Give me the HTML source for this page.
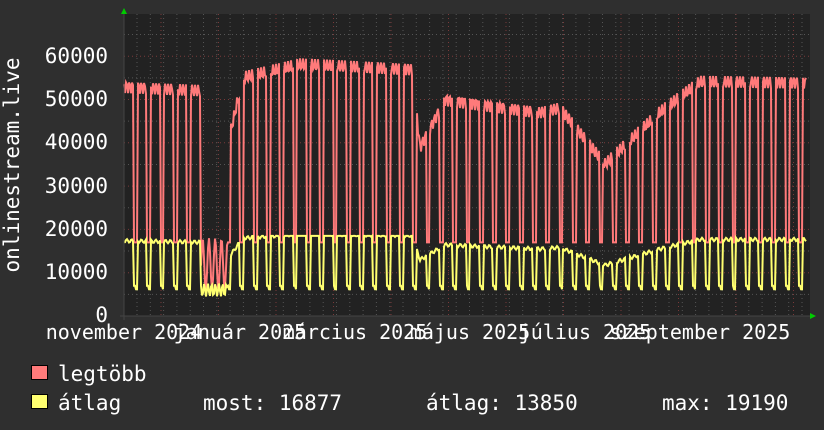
<!DOCTYPE html>
<html><head><meta charset="utf-8"><style>
html,body{margin:0;padding:0;background:#2f2f2f;width:824px;height:430px;overflow:hidden}
svg text{font-family:"DejaVu Sans Mono","Liberation Mono",monospace;fill:#fff}
</style></head><body>
<svg id="s" width="824" height="430" xmlns="http://www.w3.org/2000/svg">
<rect x="0" y="0" width="824" height="430" fill="#2f2f2f"/>
<rect x="124" y="14" width="686" height="302" fill="#222"/>
<g id="grid"></g>
<polyline id="mx" fill="none" stroke="#ff7a7a" stroke-width="2" points=""/>
<polyline id="av" fill="none" stroke="#ffff70" stroke-width="2" points=""/>
<line x1="124" y1="14" x2="124" y2="320" stroke="#444"/>
<line x1="120" y1="316" x2="812" y2="316" stroke="#444"/>
<polygon points="121,14 127,14 124,8" fill="#0c0"/>
<polygon points="810,313 810,319 816,316" fill="#0c0"/>
<g font-size="21" text-anchor="end">
<text x="108" y="63">60000</text><text x="108" y="106">50000</text>
<text x="108" y="149">40000</text><text x="108" y="193">30000</text>
<text x="108" y="236">20000</text><text x="108" y="279">10000</text>
<text x="108" y="322">0</text>
</g>
<text font-size="21" text-anchor="middle" transform="translate(19,165) rotate(-90)">onlinestream.live</text>
<g font-size="20" text-anchor="middle">
<text x="124" y="339">november 2024</text><text x="240" y="339">január 2025</text>
<text x="355" y="339">március 2025</text><text x="470" y="339">május 2025</text>
<text x="585" y="339">július 2025</text><text x="700" y="339">szeptember 2025</text>
</g>
<rect x="31.5" y="365.5" width="16" height="14" fill="#ff7a7a" stroke="#000"/>
<rect x="31.5" y="394.5" width="16" height="14" fill="#ffff70" stroke="#000"/>
<g font-size="21">
<text x="58" y="381">legtöbb</text>
<text x="58" y="410">átlag</text>
<text x="203" y="410">most: 16877</text>
<text x="426" y="410">átlag: 13850</text>
<text x="662" y="410">max: 19190</text>
</g>
</svg>
<script>
var g=document.getElementById('grid'),h='';
for(var v=5000;v<=65000;v+=5000){var y=316-v*0.00433;h+='<line x1="124" x2="810" y1="'+y+'" y2="'+y+'" stroke="'+(v%10000?'#555':'#7a3a3a')+'" stroke-dasharray="1,3"/>';}
for(var x=137;x<810;x+=13.3){h+='<line y1="14" y2="316" x1="'+x+'" x2="'+x+'" stroke="#555" stroke-dasharray="1,3"/>';}
for(var x=161;x<810;x+=57.5){h+='<line y1="14" y2="316" x1="'+x+'" x2="'+x+'" stroke="#7a3a3a" stroke-dasharray="1,3"/>';}
g.innerHTML=h;
function lvl(x){var t=[[124,53],[200,52],[205,18],[228,40],[243,55],[300,58],[412,57],[420,39],[445,50],[540,47],[560,48],[605,35],[660,47],[700,54],[810,54]];
for(var i=1;i<t.length;i++)if(x<=t[i][0]){var a=t[i-1],b=t[i];return a[1]+(b[1]-a[1])*(x-a[0])/(b[0]-a[0]);}return 54;}
var m=[],a=[],P=13.3;
for(var x=124;x<=806;x+=1){var ph=((x-124)%P)/P;var L=lvl(x)*1000;var hol=(x>200&&x<228);
var mv,av;
if(hol){mv=12000+6000*Math.sin(x);av=6000+1500*Math.sin(x*1.7);}
else if(ph<0.72){mv=L+1500*Math.sin(x*2.1);av=L/3.2+800+400*Math.sin(x*1.3);}
else if(ph<0.86){mv=17000;av=7000;}
else{mv=17000;av=6200;}
if(av>18500)av=18500;
m.push(x+','+(316-mv*0.00433).toFixed(1));a.push(x+','+(316-av*0.00433).toFixed(1));}
document.getElementById('mx').setAttribute('points',m.join(' '));
document.getElementById('av').setAttribute('points',a.join(' '));
</script>
</body></html>
